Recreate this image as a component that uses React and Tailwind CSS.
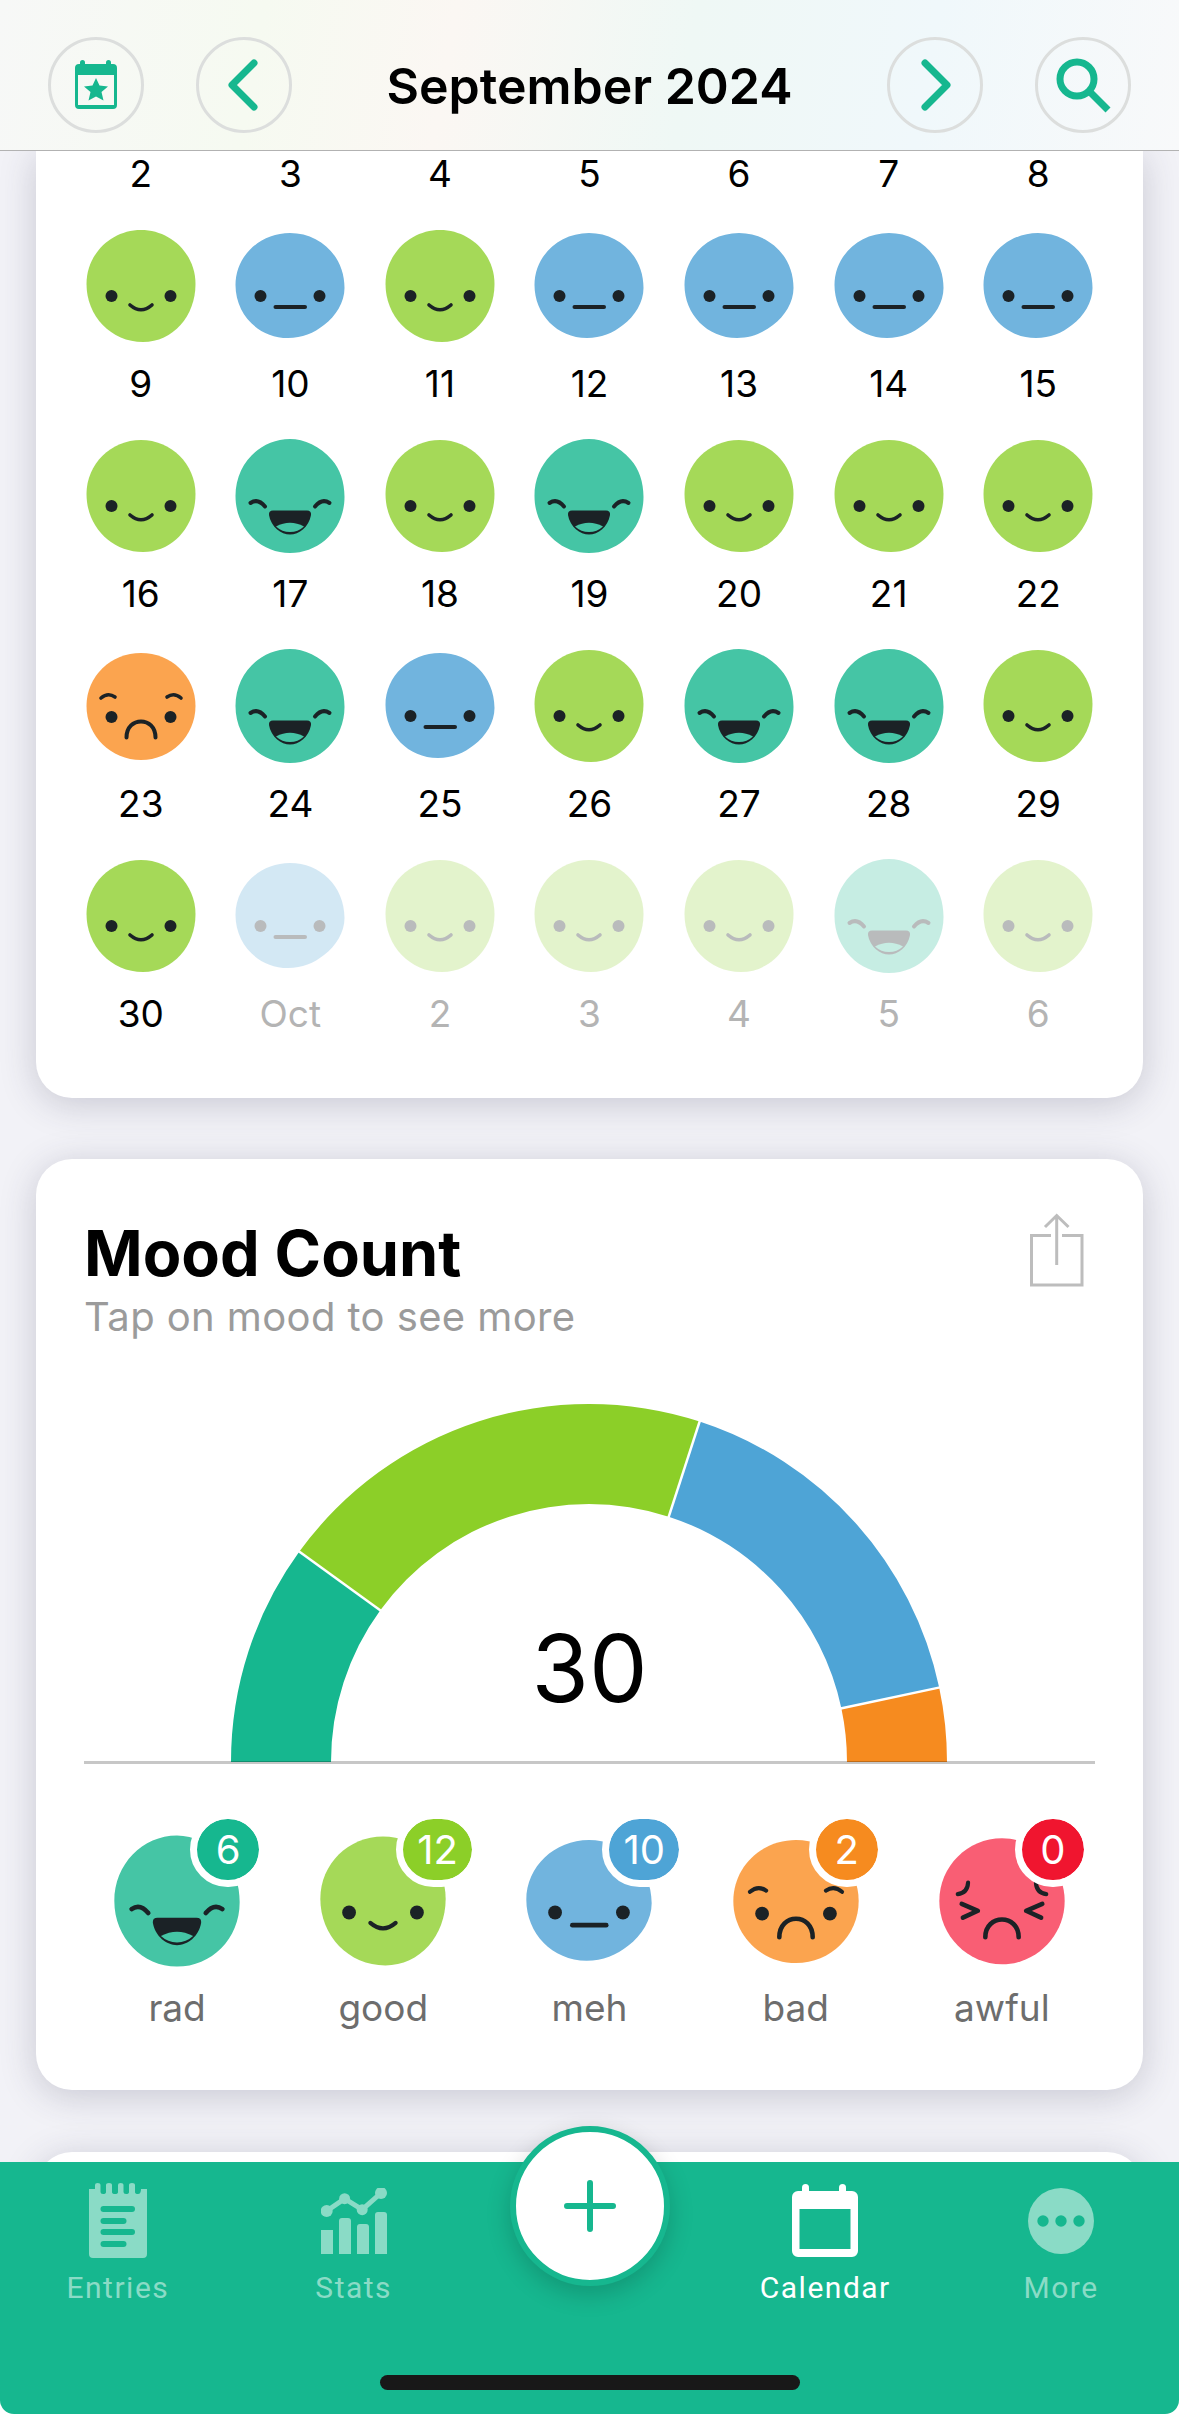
import React from "react";

const INK = "#1b2226";
const MOODS = {
  rad: { c: "#45c5a5", badge: "#16b78f" },
  good: { c: "#a5d958", badge: "#8ccf28" },
  meh: { c: "#71b4de", badge: "#4ea4d6" },
  bad: { c: "#fba44f", badge: "#f68b1f" },
  awful: { c: "#f95e74", badge: "#f0152f" },
};
const BLOBS = {
  rad: "M0 -57C14 -57 30 -50 42 -36C50 -27 54.5 -14 54.5 1C54.5 33 30 57 0 57C-30 57 -54.5 32 -54.5 0C-54.5 -32 -30 -57 0 -57Z",
  good: "M0 -56C30 -56 54.5 -32 54.5 -2C54.5 30 32 56 2 56C-30 56 -54.5 30 -54.5 -2C-54.5 -32 -30 -56 0 -56Z",
  meh: "M0 -53C30 -53 54.5 -30 54.5 2C54.5 16 46 30 34 39C24 47 12 52 -2 52C-32 52 -54.5 28 -54.5 -1C-54.5 -30 -30 -53 0 -53Z",
  bad: "M0 -53C30 -53 54.5 -30 54.5 0C54.5 30 30 54 0 54C-30 54 -54.5 30 -54.5 0C-54.5 -30 -30 -53 0 -53Z",
  awful: "M0 -54.5C30 -54.5 54.5 -30 54.5 0C54.5 30 30 55 0 55C-30 55 -54.5 30 -54.5 0C-54.5 -30 -30 -54.5 0 -54.5Z",
};

function Eyes({ y = 10 }) {
  return (
    <>
      <circle cx="-29.5" cy={y} r="6" fill={INK} />
      <circle cx="29.5" cy={y} r="6" fill={INK} />
    </>
  );
}

function Face({ mood, size = 120, dim = false }) {
  const line = { stroke: INK, fill: "none", strokeLinecap: "round", strokeLinejoin: "round" };
  return (
    <svg width={size} height={size} viewBox="-60 -60 120 120" className={dim ? "block opacity-30" : "block"}>
      <path d={BLOBS[mood]} fill={MOODS[mood].c} />
      {mood === "good" && (
        <>
          <Eyes />
          <path d="M-11 19Q0 28.5 11 19" strokeWidth="3.6" {...line} />
        </>
      )}
      {mood === "meh" && (
        <>
          <Eyes />
          <path d="M-14.5 21H15" strokeWidth="4" {...line} />
        </>
      )}
      {mood === "rad" && (
        <>
          <path d="M-39.5 7Q-32 2 -25 10.5" strokeWidth="4" {...line} />
          <path d="M39.5 7Q32 2 25 10.5" strokeWidth="4" {...line} />
          <path d="M-17 14.5H17Q21.5 14.5 21 19C19 31 9 38.5 0 38.5C-9 38.5 -19 31 -21 19Q-21.5 14.5 -17 14.5Z" fill={INK} />
          <path d="M-14 30.500Q0 23 14 30.500Q8 36 0 36Q-8 36 -14 30.500Z" fill={MOODS.rad.c} />
        </>
      )}
      {mood === "bad" && (
        <>
          <Eyes y={11} />
          <path d="M-40 -8Q-33 -14 -26 -9" strokeWidth="3.6" {...line} />
          <path d="M40 -8Q33 -14 26 -9" strokeWidth="3.6" {...line} />
          <path d="M-14.5 31.5C-14.5 10 14.5 10 14.5 31.5" strokeWidth="4" {...line} />
        </>
      )}
      {mood === "awful" && (
        <>
          <path d="M-29.5 -16Q-30 -7 -38.5 -6" strokeWidth="3.6" {...line} />
          <path d="M29.5 -16Q30 -7 38.5 -6" strokeWidth="3.6" {...line} />
          <path d="M-35 2.5L-21 8.5L-34 14.5" strokeWidth="4" {...line} />
          <path d="M35 2.5L21 8.5L34 14.5" strokeWidth="4" {...line} />
          <path d="M-14.5 31.5C-14.5 11 14.5 11 14.5 31.5" strokeWidth="4" {...line} />
        </>
      )}
    </svg>
  );
}

const g = "good", m = "meh", r = "rad", b = "bad";
const WEEKS = [
  { labels: ["2", "3", "4", "5", "6", "7", "8"], faces: [g, m, g, m, m, m, m] },
  { labels: ["9", "10", "11", "12", "13", "14", "15"], faces: [g, r, g, r, g, g, g] },
  { labels: ["16", "17", "18", "19", "20", "21", "22"], faces: [b, r, m, g, r, r, g] },
  { labels: ["23", "24", "25", "26", "27", "28", "29"], faces: [g, m, g, g, g, r, g], dimFrom: 1 },
  { labels: ["30", "Oct", "2", "3", "4", "5", "6"], faces: null, labelDimFrom: 1 },
];

function RoundButton({ children }) {
  return (
    <button className="w-[96px] h-[96px] rounded-full border-[3px] border-[#dcdedd] flex items-center justify-center">
      {children}
    </button>
  );
}

function Header() {
  return (
    <header className="relative z-10 h-[151px] shrink-0 border-b border-[#b2b2b2] px-[48px] pt-[37px] flex items-start bg-[linear-gradient(100deg,#f7f8f7_0%,#f6faf1_22%,#fbf7f3_38%,#eff8f5_58%,#f0f8fb_78%,#f8f9fa_100%)]">
      <RoundButton>
        <svg width="44" height="50" viewBox="0 0 44 50" fill="#16b78f">
          <rect x="6" y="0" width="5" height="8" rx="2.5" />
          <rect x="32" y="0" width="5" height="8" rx="2.5" />
          <path fillRule="evenodd" d="M5 4H39A4 4 0 0 1 43 8V45A4 4 0 0 1 39 49H5A4 4 0 0 1 1 45V8A4 4 0 0 1 5 4ZM4 15V45H40V15Z" />
          <path d="M22 18L25.5 25.5L34 26.5L27.5 32L29.500 40.500L22 36.500L14.500 40.500L16.500 32L10 26.500L18.500 25.500Z" />
        </svg>
      </RoundButton>
      <div className="ml-[52px]">
        <RoundButton>
          <svg width="36" height="56" viewBox="0 0 36 56" fill="none" stroke="#16b78f" strokeWidth="7" strokeLinecap="round" strokeLinejoin="round">
            <path d="M28 6L6 28L28 50" />
          </svg>
        </RoundButton>
      </div>
      <h1 className="flex-1 text-center font-['Inter',sans-serif] font-semibold text-[50px] leading-[98px] text-black">
        September 2024
      </h1>
      <RoundButton>
        <svg width="36" height="56" viewBox="0 0 36 56" fill="none" stroke="#16b78f" strokeWidth="7" strokeLinecap="round" strokeLinejoin="round">
          <path d="M8 6L30 28L8 50" />
        </svg>
      </RoundButton>
      <div className="ml-[52px]">
        <RoundButton>
          <svg width="60" height="60" viewBox="0 0 60 60" fill="none" stroke="#16b78f" strokeWidth="7">
            <circle cx="24" cy="24" r="17" />
            <path d="M37 37L55 55" />
          </svg>
        </RoundButton>
      </div>
    </header>
  );
}

function CalendarCard() {
  return (
    <section className="bg-white rounded-b-[36px] shadow-[0_6px_36px_rgba(50,50,80,0.22)] mx-[36px] px-[30px] pb-[61px] shrink-0">
      {WEEKS.map((w, i) => (
        <div key={i} className="grid grid-cols-7">
          {w.labels.map((l, j) => {
            const dimFace = w.dimFrom !== undefined && j >= w.dimFrom;
            const dimLabel = w.labelDimFrom !== undefined && j >= w.labelDimFrom;
            return (
              <div key={j} className="flex flex-col items-center">
                <span className={`h-[46px] leading-[46px] font-['Inter',sans-serif] text-[37px] ${dimLabel ? "text-[#b4b4b4]" : "text-black"}`}>
                  {l}
                </span>
                {w.faces && (
                  <div className="mt-[29px] mb-[15px]">
                    <Face mood={w.faces[j]} dim={dimFace} />
                  </div>
                )}
              </div>
            );
          })}
        </div>
      ))}
    </section>
  );
}

function polar(R, deg) {
  const a = (deg * Math.PI) / 180;
  return [358 + 147 + R * -Math.cos(a), 358 + R * -Math.sin(a)];
}
function segment(from, to) {
  const [x1, y1] = polar(358, from);
  const [x2, y2] = polar(358, to);
  const [x3, y3] = polar(258, to);
  const [x4, y4] = polar(258, from);
  return `M${x1} ${y1}A358 358 0 0 1 ${x2} ${y2}L${x3} ${y3}A258 258 0 0 0 ${x4} ${y4}Z`;
}
function divider(deg) {
  const [x1, y1] = polar(360, deg);
  const [x2, y2] = polar(256, deg);
  return `M${x1} ${y1}L${x2} ${y2}`;
}

function Gauge() {
  return (
    <div className="relative h-[362px]">
      <svg width="1011" height="362" viewBox="0 0 1011 362" className="block">
        <path d={segment(0, 36)} fill="#16b78f" />
        <path d={segment(36, 108)} fill="#8ccf28" />
        <path d={segment(108, 168)} fill="#4ea4d6" />
        <path d={segment(168, 180)} fill="#f68b1f" />
        <path d={divider(36)} stroke="#fff" strokeWidth="2.5" />
        <path d={divider(108)} stroke="#fff" strokeWidth="2.5" />
        <path d={divider(168)} stroke="#fff" strokeWidth="2.5" />
        <rect x="0" y="357" width="1011" height="3" fill="#000" opacity="0.22" />
      </svg>
      <span className="absolute left-0 right-0 top-[209px] text-center font-['Inter',sans-serif] text-[93px] leading-[110px] text-black">
        30
      </span>
    </div>
  );
}

const COUNTS = [
  ["rad", 6],
  ["good", 12],
  ["meh", 10],
  ["bad", 2],
  ["awful", 0],
];

function MoodItem({ mood, count }) {
  return (
    <div className="flex flex-col items-center">
      <div className="relative w-[138px] h-[138px]">
        <Face mood={mood} size={138} />
        <div className="absolute left-[82px] top-[-20px] box-content border-[7px] border-white rounded-full h-[61px] min-w-[62px] flex items-center justify-center" style={{ background: MOODS[mood].badge, backgroundClip: "padding-box" }}>
          <span className={`font-['Inter',sans-serif] text-[40px] leading-none text-white ${count > 9 ? "px-[14px]" : ""}`}>{count}</span>
        </div>
      </div>
      <span className="mt-[15px] font-['Inter',sans-serif] text-[37px] leading-[46px] text-[#6d6d6d]">{mood}</span>
    </div>
  );
}

function MoodCard() {
  return (
    <section className="mt-[61px] bg-white rounded-[36px] shadow-[0_6px_36px_rgba(50,50,80,0.22)] mx-[36px] h-[931px] px-[48px] pt-[58px] shrink-0">
      <div className="flex justify-between items-start">
        <div>
          <h2 className="font-['Inter',sans-serif] font-bold text-[63px] leading-[72px] text-black">Mood Count</h2>
          <p className="font-['Inter',sans-serif] text-[40px] leading-[46px] tracking-[0.4px] text-[#9b9b9b] mt-[5px]">Tap on mood to see more</p>
        </div>
        <svg width="54" height="74" viewBox="0 0 54 74" fill="none" stroke="#bdbdbd" strokeWidth="3" className="mr-[11px] mt-[-4px]">
          <path d="M21 22.500H1.500V72H52V22.500H32" />
          <path d="M26.700 52V3M15 14L26.700 2.500L38.500 14" />
        </svg>
      </div>
      <div className="mt-[64px]">
        <Gauge />
      </div>
      <div className="mt-[66px] -mx-[10px] grid grid-cols-5">
        {COUNTS.map(([mood, count]) => (
          <MoodItem key={mood} mood={mood} count={count} />
        ))}
      </div>
    </section>
  );
}

function EntriesIcon() {
  return (
    <svg width="58" height="75" viewBox="0 0 58 75" fill="#8adbc6">
      <path d="M0 6H6V2Q6 0 8.500 0Q11.500 0 11.500 2V9Q11.500 11 14 11Q17 11 17 9V2Q17 0 20 0Q23 0 23 2V9Q23 11 26 11Q29 11 29 9V2Q29 0 31.500 0Q34.500 0 34.500 2V9Q34.500 11 37 11Q40 11 40 9V2Q40 0 43 0Q46 0 46 2V9Q46 11 49 11Q52 11 52 6H58V71Q58 75 54 75H4Q0 75 0 71Z" />
      <g fill="#16b78f">
        <rect x="11.500" y="23" width="34.500" height="6" rx="3" />
        <rect x="11.500" y="35" width="26" height="6" rx="3" />
        <rect x="11.500" y="46" width="34.500" height="6" rx="3" />
        <rect x="11.500" y="58" width="26" height="6" rx="3" />
      </g>
    </svg>
  );
}
function StatsIcon() {
  return (
    <svg width="66" height="66" viewBox="0 0 66 66" fill="#8adbc6">
      <rect x="0" y="42" width="12" height="24" />
      <path d="M18 33Q18 30 21 30H27Q30 30 30 33V66H18Z" />
      <path d="M36 39Q36 36 39 36H45Q48 36 48 39V66H36Z" />
      <path d="M54 27Q54 24 57 24H63Q66 24 66 27V66H54Z" />
      <path d="M5.700 23L23.600 10.700L41.200 21.700L60 5" fill="none" stroke="#8adbc6" strokeWidth="5" />
      <circle cx="5.700" cy="23" r="6" />
      <circle cx="23.600" cy="10.700" r="5.500" />
      <circle cx="41.200" cy="21.700" r="5.500" />
      <circle cx="60" cy="5" r="6" />
    </svg>
  );
}
function CalendarIcon() {
  return (
    <svg width="66" height="73" viewBox="0 0 66 73" fill="#fff">
      <rect x="10" y="0" width="7" height="12" rx="3.500" />
      <rect x="47" y="0" width="7" height="12" rx="3.500" />
      <path fillRule="evenodd" d="M6 7H60A6 6 0 0 1 66 13V67A6 6 0 0 1 60 73H6A6 6 0 0 1 0 67V13A6 6 0 0 1 6 7ZM7.500 25V65H58.500V25Z" />
    </svg>
  );
}
function MoreIcon() {
  return (
    <svg width="66" height="66" viewBox="0 0 66 66">
      <circle cx="33" cy="33" r="33" fill="#8adbc6" />
      <circle cx="15" cy="33" r="5.700" fill="#16b78f" />
      <circle cx="33" cy="33" r="5.700" fill="#16b78f" />
      <circle cx="51" cy="33" r="5.700" fill="#16b78f" />
    </svg>
  );
}

function NavItem({ icon, label, active }) {
  return (
    <div className="flex flex-col items-center">
      <div className="h-[75px] flex items-center justify-center">{icon}</div>
      <span className={`mt-[10px] font-['Roboto',sans-serif] text-[30px] leading-[40px] tracking-[1.5px] ${active ? "text-white" : "text-[#8adbc6]"}`}>
        {label}
      </span>
    </div>
  );
}

function BottomNav() {
  return (
    <nav className="relative z-10 h-[252px] shrink-0 bg-[#16b78f] rounded-b-[14px] pt-[21px]">
      <div className="grid grid-cols-5">
        <NavItem icon={<EntriesIcon />} label="Entries" />
        <NavItem icon={<StatsIcon />} label="Stats" />
        <div />
        <NavItem icon={<CalendarIcon />} label="Calendar" active />
        <NavItem icon={<MoreIcon />} label="More" />
      </div>
      <button className="absolute left-1/2 -translate-x-1/2 top-[-36px] w-[160px] h-[160px] rounded-full bg-white border-[6px] border-[#16b78f] shadow-[0_8px_24px_rgba(0,0,0,0.18)] flex items-center justify-center">
        <svg width="52" height="52" viewBox="0 0 52 52" fill="none" stroke="#16b78f" strokeWidth="6" strokeLinecap="round">
          <path d="M26 3V49M3 26H49" />
        </svg>
      </button>
      <div className="absolute left-[380px] right-[379px] top-[213px] h-[15px] rounded-full bg-[#181818]" />
    </nav>
  );
}

export default function App() {
  return (
    <div className="w-[1179px] h-[2414px] flex flex-col overflow-hidden bg-white">
      <Header />
      <main className="flex-1 min-h-0 overflow-hidden bg-[#f2f2f7] flex flex-col">
        <CalendarCard />
        <MoodCard />
        <section className="mt-[62px] bg-white rounded-[36px] shadow-[0_6px_36px_rgba(50,50,80,0.22)] mx-[36px] h-[300px] shrink-0" />
      </main>
      <BottomNav />
    </div>
  );
}
